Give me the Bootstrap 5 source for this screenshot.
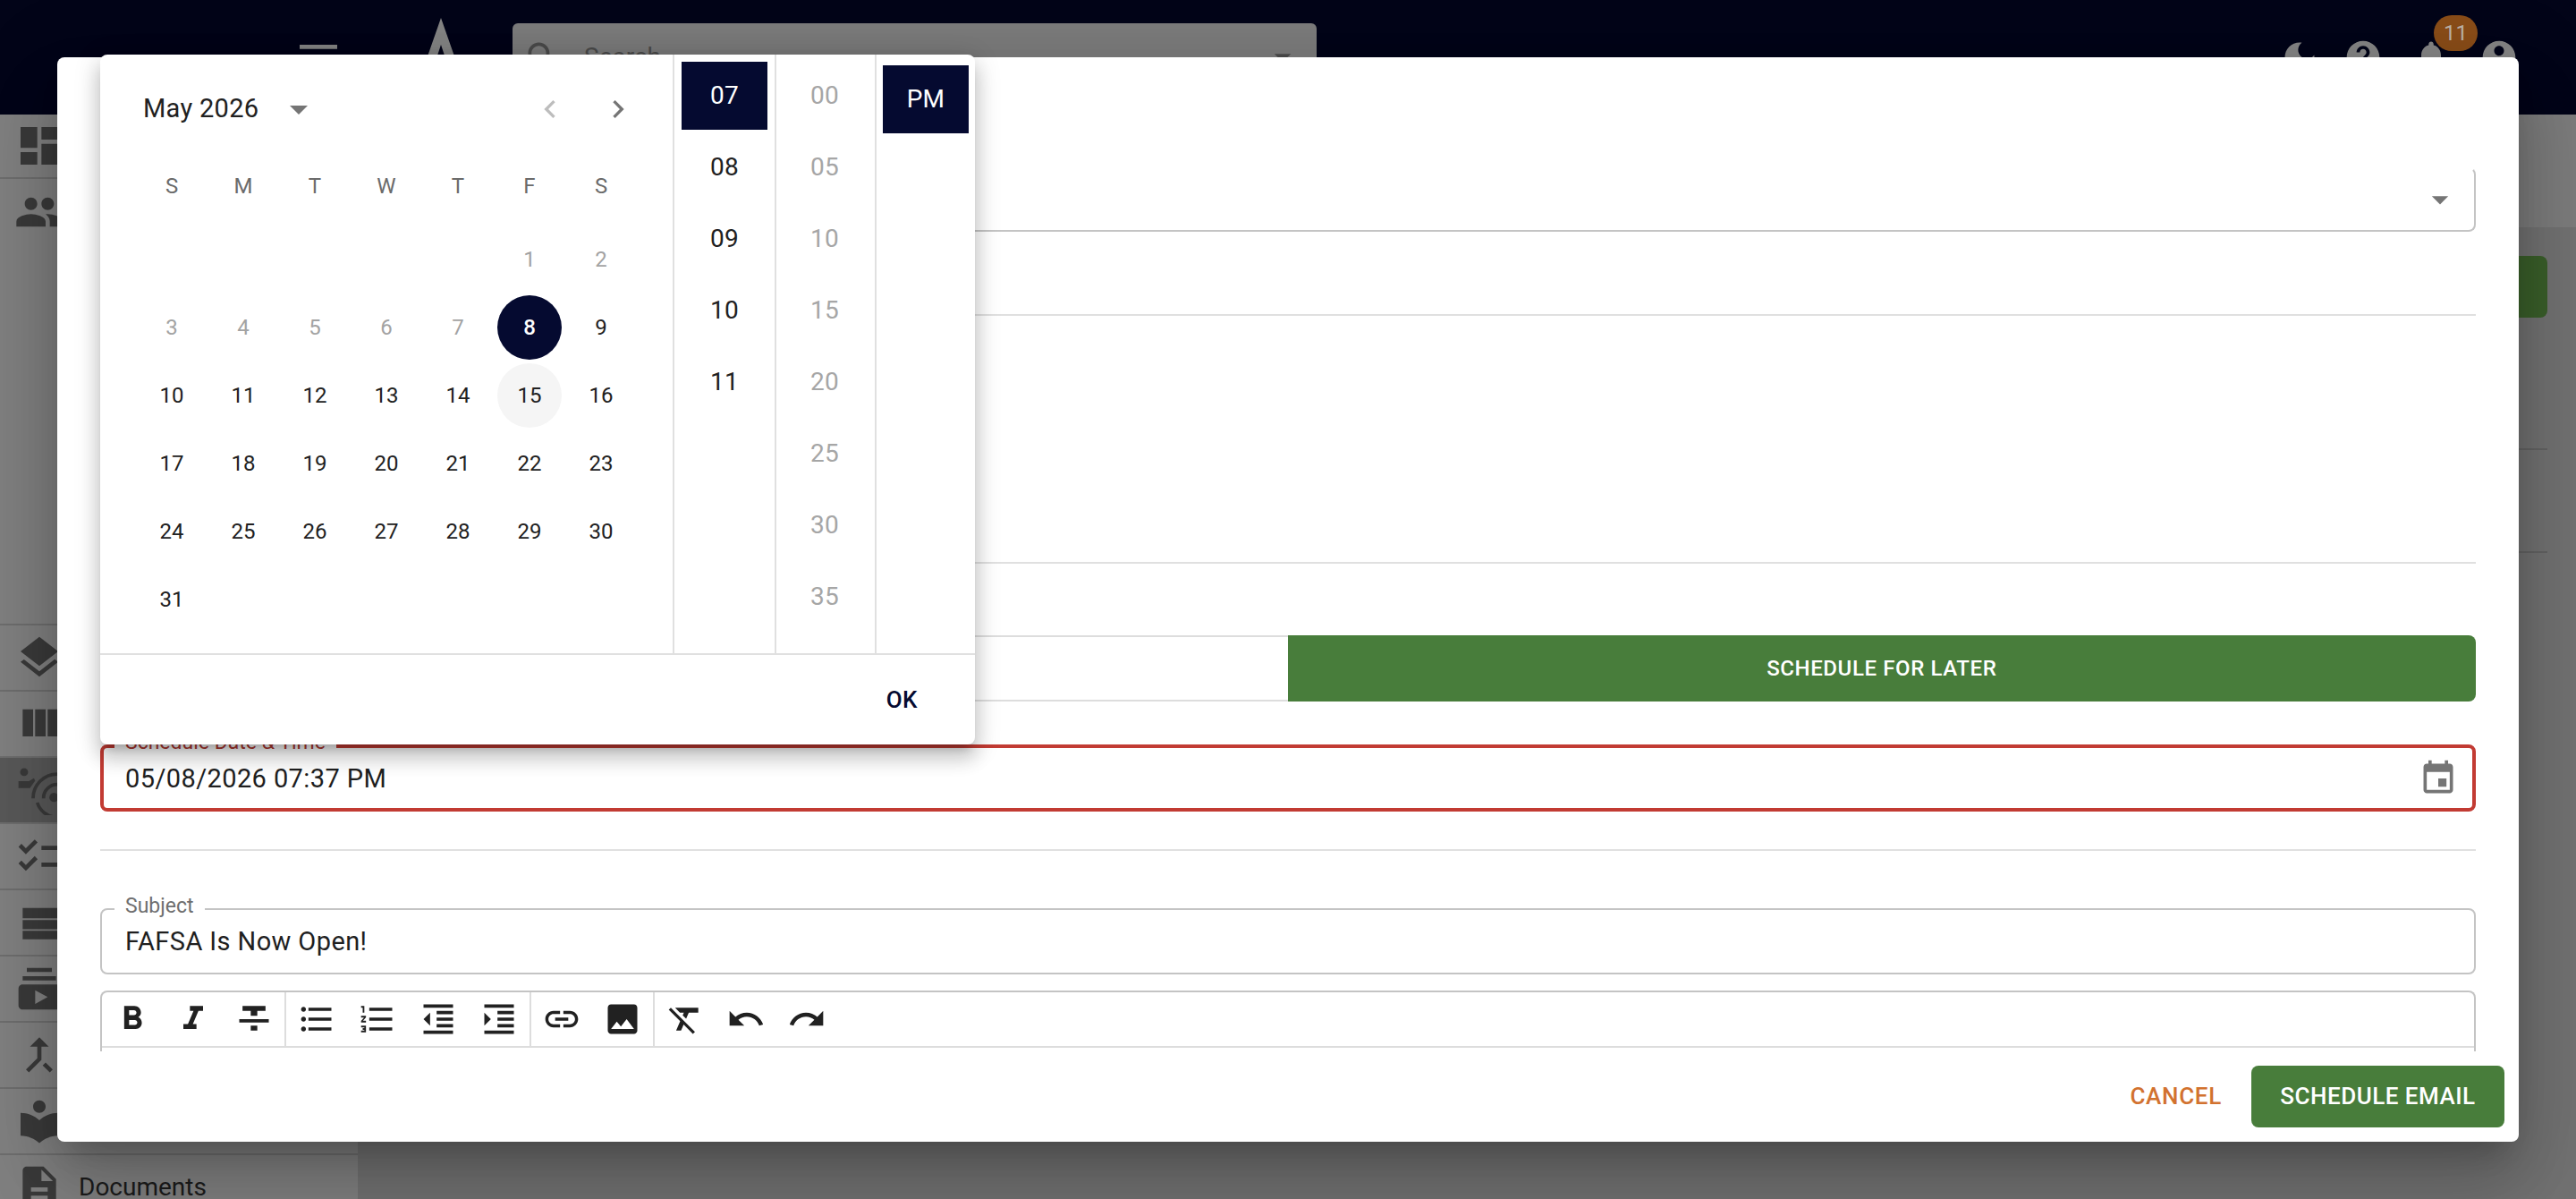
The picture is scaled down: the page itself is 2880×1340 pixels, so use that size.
<!DOCTYPE html>
<html lang="en">
<head>
    <meta charset="UTF-8">
    <meta name="viewport" content="width=device-width, initial-scale=1.0">
    <title>Schedule Email</title>
    <link href="https://cdn.jsdelivr.net/npm/bootstrap@5.3.0/dist/css/bootstrap.min.css" rel="stylesheet">
    <style>
        body { font-family: Roboto, "Liberation Sans", sans-serif; background: #727272; height: 1340px; overflow: hidden; position: relative; color: #1f1f1f; }
        svg { fill: currentColor; flex-shrink: 0; display: block; }

        /* page behind the dialog, colours already dimmed by the backdrop */
        .top-bar { height: 128px; background: #020418; color: #858585; padding-left: 328px; padding-right: 64px; }
        .logo-mark { width: 56px; height: 88px; margin-left: 81px; margin-right: 52px; }
        .search-box { width: 899px; height: 76px; background: #7c7c7c; border-radius: 6px; color: #4c4c4c; padding: 0 16px 0 12px; font-size: 28px; }
        .top-icons { gap: 32px; }
        .moon-icon { margin-right: -5px; }
        .alert-count { position: absolute; left: 25px; top: -25px; width: 49px; height: 40px; border-radius: 20px; background: #8a4d18; color: #bdb3a8; font-size: 24px; line-height: 40px; text-align: center; }
        .side-nav { width: 400px; background: #808080; color: #3a3a3a; height: 1212px; }
        .side-row { height: 74px; padding-left: 16px; border-bottom: 2px solid #6e6e6e; font-size: 28px; }
        .side-row.first-row { height: 72px; }
        .side-row.plain-row { border-bottom: 0; }
        .side-row.current-row { background: #595959; }
        .side-lower { margin-top: 423px; border-top: 2px solid #6e6e6e; }
        .doc-label { color: #1b1b1b; margin-left: 16px; }
        .main-strip { height: 126px; background: #7c7c7c; }
        .main-action { width: 300px; height: 69px; background: #3a5f2a; border-radius: 8px; margin: 32px 32px 0 auto; }
        .main-line { height: 2px; background: #636363; margin-right: 32px; }
        .line-one { margin-top: 146px; }
        .line-two { margin-top: 113px; }

        /* dialog */
        .dlg-box { position: absolute; left: 64px; top: 64px; width: 2752px; height: 1212px; background: #fff; border-radius: 8px; box-shadow: 0 22px 30px -14px rgba(0,0,0,.2), 0 48px 76px 6px rgba(0,0,0,.14), 0 18px 92px 16px rgba(0,0,0,.12); }
        .dlg-body { height: 1111px; overflow: hidden; padding: 123px 48px 0 48px; }
        .out-field { position: relative; height: 74px; border: 2px solid #c4c4c4; border-radius: 8px; padding: 0 16px 0 26px; font-size: 29px; letter-spacing: .4px; }
        .out-field.select-field { height: 72px; border-top-color: #fff; }
        .out-field.bad-field { height: 75px; border: 4px solid #c23b33; padding-left: 24px; }
        .field-val { padding-top: 2px; }
        .field-tag { position: absolute; left: 14px; top: -19px; padding: 0 12px; background: #fff; font-size: 23px; line-height: 30px; color: #6f6f6f; letter-spacing: 0; }
        .bad-field .field-tag { left: 12px; top: -21px; padding: 0 12px; color: #b03a33; }
        .hr-line { height: 2px; background: #e0e0e0; }
        .hr-a { margin-top: 92px; }
        .hr-b { margin-top: 275px; }
        .hr-c { margin-top: 42px; }
        .mode-row { margin-top: 80px; margin-bottom: 48px; height: 74px; }
        .mode-row .btn { flex: 1 1 0; height: 74px; font-size: 24px; font-weight: 500; letter-spacing: .6px; border: 0; }
        .mode-off { background: #fff; border-top: 2px solid #ddd !important; border-bottom: 2px solid #ddd !important; }
        .mode-on, .mode-on:hover { background: #487d3b; color: #fff; border-radius: 0 8px 8px 0 !important; }
        .subject-wrap { margin-top: 64px; }
        .editor-box { margin-top: 18px; height: 90px; border: 2px solid #c4c4c4; border-bottom: 0; border-radius: 8px 8px 0 0; color: #212121; }
        .tool-row { height: 62px; border-bottom: 2px solid #ddd; }
        .tool-set { height: 60px; border-right: 2px solid #ddd; }
        .tool-set svg { width: 44px; height: 44px; margin: 0 12px; }
        .dlg-foot { height: 101px; padding: 16px 16px 0 0; }
        .dlg-cancel { color: #d2722f; font-size: 26px; font-weight: 500; letter-spacing: .7px; line-height: 69px; margin-right: 33px; }
        .dlg-send, .dlg-send:hover { width: 283px; height: 69px; background: #487d3b; color: #fff; font-size: 26px; font-weight: 500; letter-spacing: .5px; border-radius: 8px; border: 0; padding: 0; }

        /* date picker popover */
        .pick-pop { position: absolute; left: 112px; top: 61px; width: 978px; height: 771px; background: #fff; border-radius: 8px; box-shadow: 0 10px 10px -6px rgba(0,0,0,.2), 0 16px 20px 2px rgba(0,0,0,.14), 0 6px 28px 4px rgba(0,0,0,.12); }
        .pick-top { height: 669px; border-bottom: 2px solid #e0e0e0; box-sizing: content-box; overflow: hidden; }
        .cal-side { width: 640px; }
        .cal-head { height: 122px; padding: 0 41px 0 48px; }
        .cal-title { font-size: 29px; letter-spacing: .3px; color: #212121; }
        .cal-drop { width: 48px; height: 48px; color: #757575; margin-left: 21px; }
        .cal-nav { gap: 36px; color: #757575; }
        .cal-nav svg { width: 40px; height: 40px; }
        .cal-nav .nav-off { color: #bdbdbd; }
        .cal-days { display: grid; grid-template-columns: repeat(7, 80px); justify-content: center; font-size: 24px; text-align: center; }
        .cal-week { color: #6b6b6b; line-height: 50px; margin-bottom: 19px; }
        .cal-cells { grid-auto-rows: 76px; color: #212121; }
        .cal-cells span { width: 72px; height: 72px; margin: 2px 4px; line-height: 72px; border-radius: 50%; }
        .cal-cells .day-off { color: #a3a3a3; }
        .cal-cells .day-pick { background: #050a30; color: #fff; font-weight: 500; }
        .cal-cells .day-now { background: #f5f5f5; }
        .time-col { border-left: 2px solid #e0e0e0; padding-top: 8px; font-size: 28px; letter-spacing: .3px; text-align: center; color: #212121; }
        .time-col div { width: 96px; height: 76px; line-height: 76px; margin: 0 auto 4px; }
        .hour-col { width: 114px; }
        .min-col { width: 112px; color: #a6a6a6; padding-right: 2px; }
        .ampm-col { flex: 1 1 0; padding-top: 12px; }
        .time-col .time-on { background: #050a30; color: #fff; }
        .pick-foot { height: 100px; padding-right: 64px; color: #050a30; font-size: 26px; font-weight: 500; letter-spacing: .5px; }
    </style>
</head>
<body>
    <header class="top-bar d-flex align-items-center">
        <svg width="56" height="56" viewBox="0 0 24 24"><path d="M3 18h18v-2H3v2zm0-5h18v-2H3v2zm0-7v2h18V6H3z"/></svg>
        <svg class="logo-mark" viewBox="0 0 56 88"><path fill-rule="evenodd" d="M28 0L56 80H0zM28 30L14 72H42z"/></svg>
        <div class="search-box d-flex align-items-center">
            <svg width="44" height="44" viewBox="0 0 24 24"><path d="M15.5 14h-.79l-.28-.27C15.41 12.59 16 11.11 16 9.5 16 5.91 13.09 3 9.5 3S3 5.91 3 9.5 5.91 16 9.5 16c1.61 0 3.09-.59 4.23-1.57l.27.28v.79l5 4.99L20.49 19l-4.99-5zm-6 0C7.01 14 5 11.99 5 9.5S7.01 5 9.5 5 14 7.01 14 9.5 11.99 14 9.5 14z"/></svg>
            <span class="ms-4">Search</span>
            <svg class="ms-auto" width="44" height="44" viewBox="0 0 24 24"><path d="M7 10l5 5 5-5z"/></svg>
        </div>
        <div class="top-icons d-flex ms-auto">
            <svg class="moon-icon" width="44" height="44" viewBox="0 0 24 24"><path d="M12 3c-4.97 0-9 4.03-9 9s4.03 9 9 9 9-4.03 9-9c0-.46-.04-.92-.1-1.36-.98 1.37-2.58 2.26-4.4 2.26-2.98 0-5.4-2.42-5.4-5.4 0-1.81.89-3.42 2.26-4.4-.44-.06-.9-.1-1.36-.1z"/></svg>
            <svg width="44" height="44" viewBox="0 0 24 24"><path d="M12 2C6.48 2 2 6.48 2 12s4.48 10 10 10 10-4.48 10-10S17.52 2 12 2zm1 17h-2v-2h2v2zm2.07-7.75l-.9.92C13.45 12.9 13 13.5 13 15h-2v-.5c0-1.1.45-2.1 1.17-2.83l1.24-1.26c.37-.36.59-.86.59-1.41 0-1.1-.9-2-2-2s-2 .9-2 2H8c0-2.21 1.79-4 4-4s4 1.79 4 4c0 .88-.36 1.68-.93 2.25z"/></svg>
            <div class="position-relative">
                <svg width="44" height="44" viewBox="0 0 24 24"><path d="M12 22c1.1 0 2-.9 2-2h-4c0 1.1.89 2 2 2zm6-6v-5c0-3.07-1.64-5.64-4.5-6.32V4c0-.83-.67-1.5-1.5-1.5s-1.5.67-1.5 1.5v.68C7.63 5.36 6 7.92 6 11v5l-2 2v1h16v-1l-2-2z"/></svg>
                <span class="alert-count">11</span>
            </div>
            <svg width="44" height="44" viewBox="0 0 24 24"><path d="M12 2C6.48 2 2 6.48 2 12s4.48 10 10 10 10-4.48 10-10S17.52 2 12 2zm0 3c1.66 0 3 1.34 3 3s-1.34 3-3 3-3-1.34-3-3 1.34-3 3-3zm0 14.2c-2.5 0-4.71-1.28-6-3.22.03-1.99 4-3.08 6-3.08 1.99 0 5.97 1.09 6 3.08-1.29 1.94-3.5 3.22-6 3.22z"/></svg>
        </div>
    </header>

    <div class="d-flex">
        <nav class="side-nav">
            <div class="side-row first-row d-flex align-items-center"><svg width="56" height="56" viewBox="0 0 24 24"><path d="M3 13h8V3H3v10zm0 8h8v-6H3v6zm10 0h8V11h-8v10zm0-18v6h8V3h-8z"/></svg></div>
            <div class="side-row plain-row d-flex align-items-center"><svg width="56" height="56" viewBox="0 0 24 24"><path d="M16 11c1.66 0 2.99-1.34 2.99-3S17.66 5 16 5c-1.66 0-3 1.34-3 3s1.34 3 3 3zm-8 0c1.66 0 2.99-1.34 2.99-3S9.66 5 8 5C6.34 5 5 6.34 5 8s1.34 3 3 3zm0 2c-2.33 0-7 1.17-7 3.5V19h14v-2.5c0-2.33-4.67-3.5-7-3.5zm8 0c-.29 0-.62.02-.97.05 1.16.84 1.97 1.97 1.97 3.45V19h6v-2.5c0-2.33-4.67-3.5-7-3.5z"/></svg></div>
            <div class="side-lower">
                <div class="side-row d-flex align-items-center"><svg width="56" height="56" viewBox="0 0 24 24"><path d="M11.99 18.54l-7.37-5.73L3 14.07l9 7 9-7-1.63-1.27-7.38 5.74zM12 16l7.36-5.73L21 9l-9-7-9 7 1.63 1.27L12 16z"/></svg></div>
                <div class="side-row d-flex align-items-center"><svg width="56" height="56" viewBox="0 0 24 24"><path d="M10 18h5V5h-5v13zm-6 0h5V5H4v13zM16 5v13h5V5h-5z"/></svg></div>
                <div class="side-row current-row d-flex align-items-center"><svg width="56" height="56" viewBox="0 0 24 24"><circle cx="4.7" cy="3.4" r="1.9"/><path d="M2 7.7h5l2.4-1.4.6 1.2L7.5 11H2z"/><path fill="none" stroke="currentColor" stroke-width="1.6" d="M9 16A11.6 11.6 0 0 1 20.6 4.3M14 16A6.6 6.6 0 0 1 20.6 9.3M11 18A10 10 0 0 0 20 25"/><circle cx="19" cy="15.5" r="2.2"/></svg></div>
                <div class="side-row d-flex align-items-center"><svg width="56" height="56" viewBox="0 0 24 24"><path d="M22 7h-9v2h9V7zm0 8h-9v2h9v-2zM5.54 11L2 7.46l1.41-1.41 2.12 2.12 4.24-4.24 1.41 1.41L5.54 11zm0 8L2 15.46l1.41-1.41 2.12 2.12 4.24-4.24 1.41 1.41L5.54 19z"/></svg></div>
                <div class="side-row d-flex align-items-center"><svg width="56" height="56" viewBox="0 0 24 24"><path d="M4 5h17v5H4zM4 10.8h17v4.4H4zM4 16h17v4H4z"/></svg></div>
                <div class="side-row d-flex align-items-center"><svg width="56" height="56" viewBox="0 0 24 24"><path d="M20 8H4V6h16v2zm-2-6H6v2h12V2zm4 10v8c0 1.1-.9 2-2 2H4c-1.1 0-2-.9-2-2v-8c0-1.1.9-2 2-2h16c1.1 0 2 .9 2 2zm-6 4l-6-3.27v6.53L16 16z"/></svg></div>
                <div class="side-row d-flex align-items-center"><svg width="56" height="56" viewBox="0 0 24 24"><path d="M17 20.41L18.41 19 15 15.59 13.59 17 17 20.41zM7.5 8H11v5.59L5.59 19 7 20.41l6-6V8h3.5L12 3.5 7.5 8z"/></svg></div>
                <div class="side-row d-flex align-items-center"><svg width="56" height="56" viewBox="0 0 24 24"><path d="M12 11.55C9.64 9.35 6.48 8 3 8v11c3.48 0 6.64 1.35 9 3.55 2.36-2.19 5.52-3.55 9-3.55V8c-3.48 0-6.64 1.35-9 3.55zM12 8c1.66 0 3-1.34 3-3s-1.34-3-3-3-3 1.34-3 3 1.34 3 3 3z"/></svg></div>
                <div class="side-row d-flex align-items-center"><svg width="56" height="56" viewBox="0 0 24 24"><path d="M14 2H6c-1.1 0-1.99.9-1.99 2L4 20c0 1.1.89 2 1.99 2H18c1.1 0 2-.9 2-2V8l-6-6zm2 16H8v-2h8v2zm0-4H8v-2h8v2zm-3-5V3.5L18.5 9H13z"/></svg><span class="doc-label">Documents</span></div>
            </div>
        </nav>
        <main class="flex-grow-1">
            <div class="main-strip"></div>
            <div class="main-action"></div>
            <div class="main-line line-one"></div>
            <div class="main-line line-two"></div>
        </main>
    </div>

    <!-- Schedule email dialog -->
    <div class="dlg-box">
        <div class="dlg-body">
            <div class="out-field select-field d-flex align-items-center justify-content-end">
                <svg width="44" height="44" viewBox="0 0 24 24" style="color:#757575"><path d="M7 10l5 5 5-5z"/></svg>
            </div>
            <div class="hr-line hr-a"></div>
            <div class="hr-line hr-b"></div>
            <div class="mode-row btn-group w-100">
                <button class="btn mode-off" type="button"></button>
                <button class="btn mode-on" type="button">SCHEDULE FOR LATER</button>
            </div>
            <div class="out-field bad-field d-flex align-items-center justify-content-between">
                <span class="field-tag">Schedule Date &amp; Time</span>
                <span class="field-val">05/08/2026 07:37 PM</span>
                <svg width="44" height="44" viewBox="0 0 24 24" style="color:#757575"><path d="M17 12h-5v5h5v-5zM16 1v2H8V1H6v2H5c-1.11 0-1.99.9-1.99 2L3 19c0 1.1.89 2 2 2h14c1.1 0 2-.9 2-2V5c0-1.1-.9-2-2-2h-1V1h-2zm3 18H5V8h14v11z"/></svg>
            </div>
            <div class="hr-line hr-c"></div>
            <div class="subject-wrap">
                <div class="out-field d-flex align-items-center">
                    <span class="field-tag">Subject</span>
                    <span class="field-val">FAFSA Is Now Open!</span>
                </div>
            </div>
            <div class="editor-box">
                <div class="tool-row d-flex">
                    <div class="tool-set d-flex align-items-center">
                        <svg viewBox="0 0 24 24"><path d="M15.6 10.79c.97-.67 1.65-1.77 1.65-2.79 0-2.26-1.75-4-4-4H7v14h7.04c2.09 0 3.71-1.7 3.71-3.79 0-1.52-.86-2.82-2.15-3.42zM10 6.5h3c.83 0 1.5.67 1.5 1.5s-.67 1.5-1.5 1.5h-3v-3zm3.5 9H10v-3h3.5c.83 0 1.5.67 1.5 1.5s-.67 1.5-1.5 1.5z"/></svg>
                        <svg viewBox="0 0 24 24"><path d="M10 4v3h2.21l-3.42 8H6v3h8v-3h-2.21l3.42-8H18V4z"/></svg>
                        <svg viewBox="0 0 24 24"><path d="M10 19h4v-3h-4v3zM5 4v3h5v3h4V7h5V4H5zM3 14h18v-2H3v2z"/></svg>
                    </div>
                    <div class="tool-set d-flex align-items-center">
                        <svg viewBox="0 0 24 24"><path d="M4 10.5c-.83 0-1.5.67-1.5 1.5s.67 1.5 1.5 1.5 1.5-.67 1.5-1.5-.67-1.5-1.5-1.5zm0-6c-.83 0-1.5.67-1.5 1.5S3.17 7.5 4 7.5 5.5 6.83 5.5 6 4.83 4.5 4 4.5zm0 12c-.83 0-1.5.68-1.5 1.5s.68 1.5 1.5 1.5 1.5-.68 1.5-1.5-.67-1.5-1.5-1.5zM7 19h14v-2H7v2zm0-6h14v-2H7v2zm0-8v2h14V5H7z"/></svg>
                        <svg viewBox="0 0 24 24"><path d="M2 17h2v.5H3v1h1v.5H2v1h3v-4H2v1zm1-9h1V4H2v1h1v3zm-1 3h1.8L2 13.1v.9h3v-1H3.2L5 10.9V10H2v1zm5-6v2h14V5H7zm0 14h14v-2H7v2zm0-6h14v-2H7v2z"/></svg>
                        <svg viewBox="0 0 24 24"><path d="M11 17h10v-2H11v2zm-8-5l4 4V8l-4 4zm0 9h18v-2H3v2zM3 3v2h18V3H3zm8 6h10V7H11v2zm0 4h10v-2H11v2z"/></svg>
                        <svg viewBox="0 0 24 24"><path d="M3 21h18v-2H3v2zM3 8v8l4-4-4-4zm8 9h10v-2H11v2zM3 3v2h18V3H3zm8 6h10V7H11v2zm0 4h10v-2H11v2z"/></svg>
                    </div>
                    <div class="tool-set d-flex align-items-center">
                        <svg viewBox="0 0 24 24"><path d="M3.9 12c0-1.71 1.39-3.1 3.1-3.1h4V7H7c-2.76 0-5 2.24-5 5s2.24 5 5 5h4v-1.9H7c-1.71 0-3.1-1.39-3.1-3.1zM8 13h8v-2H8v2zm9-6h-4v1.9h4c1.71 0 3.1 1.39 3.1 3.1s-1.39 3.1-3.1 3.1h-4V17h4c2.76 0 5-2.24 5-5s-2.24-5-5-5z"/></svg>
                        <svg viewBox="0 0 24 24"><path d="M21 19V5c0-1.1-.9-2-2-2H5c-1.1 0-2 .9-2 2v14c0 1.1.9 2 2 2h14c1.1 0 2-.9 2-2zM8.5 13.5l2.5 3.01L14.5 12l4.5 6H5l3.5-4.5z"/></svg>
                    </div>
                    <div class="tool-set d-flex align-items-center border-0">
                        <svg viewBox="0 0 24 24"><path d="M3.27 5L2 6.27l6.97 6.97L6.5 19h3l1.57-3.66L16.73 21 18 19.73 3.55 5.27 3.27 5zM6 5v.18L8.82 8h2.4l-.72 1.68 2.1 2.1L14.21 8H20V5H6z"/></svg>
                        <svg viewBox="0 0 24 24"><path d="M12.5 8c-2.65 0-5.05.99-6.9 2.6L2 7v9h9l-3.62-3.62c1.39-1.16 3.16-1.88 5.12-1.88 3.54 0 6.55 2.31 7.6 5.5l2.37-.78C21.08 11.03 17.15 8 12.5 8z"/></svg>
                        <svg viewBox="0 0 24 24"><path d="M18.4 10.6C16.55 8.99 14.15 8 11.5 8c-4.65 0-8.58 3.03-9.96 7.22L3.9 16c1.05-3.19 4.05-5.5 7.6-5.5 1.95 0 3.73.72 5.12 1.88L13 16h9V7l-3.6 3.6z"/></svg>
                    </div>
                </div>
            </div>
        </div>
        <div class="dlg-foot d-flex justify-content-end align-items-start">
            <span class="dlg-cancel">CANCEL</span>
            <button class="btn dlg-send" type="button">SCHEDULE EMAIL</button>
        </div>
    </div>

    <!-- Date and time picker -->
    <div class="pick-pop">
        <div class="pick-top d-flex">
            <div class="cal-side">
                <div class="cal-head d-flex align-items-center">
                    <span class="cal-title">May 2026</span>
                    <svg class="cal-drop" viewBox="0 0 24 24"><path d="M7 10l5 5 5-5z"/></svg>
                    <div class="cal-nav d-flex ms-auto">
                        <svg class="nav-off" viewBox="0 0 24 24"><path d="M15.41 7.41L14 6l-6 6 6 6 1.41-1.41L10.83 12z"/></svg>
                        <svg viewBox="0 0 24 24"><path d="M10 6L8.59 7.41 13.17 12l-4.58 4.59L10 18l6-6z"/></svg>
                    </div>
                </div>
                <div class="cal-days cal-week">
                    <span>S</span><span>M</span><span>T</span><span>W</span><span>T</span><span>F</span><span>S</span>
                </div>
                <div class="cal-days cal-cells">
                    <span></span><span></span><span></span><span></span><span></span><span class="day-off">1</span><span class="day-off">2</span>
                    <span class="day-off">3</span><span class="day-off">4</span><span class="day-off">5</span><span class="day-off">6</span><span class="day-off">7</span><span class="day-pick">8</span><span>9</span>
                    <span>10</span><span>11</span><span>12</span><span>13</span><span>14</span><span class="day-now">15</span><span>16</span>
                    <span>17</span><span>18</span><span>19</span><span>20</span><span>21</span><span>22</span><span>23</span>
                    <span>24</span><span>25</span><span>26</span><span>27</span><span>28</span><span>29</span><span>30</span>
                    <span>31</span>
                </div>
            </div>
            <div class="time-col hour-col">
                <div class="time-on">07</div><div>08</div><div>09</div><div>10</div><div>11</div>
            </div>
            <div class="time-col min-col">
                <div>00</div><div>05</div><div>10</div><div>15</div><div>20</div><div>25</div><div>30</div><div>35</div>
            </div>
            <div class="time-col ampm-col">
                <div class="time-on">PM</div>
            </div>
        </div>
        <div class="pick-foot d-flex justify-content-end align-items-center">OK</div>
    </div>
</body>
</html>
